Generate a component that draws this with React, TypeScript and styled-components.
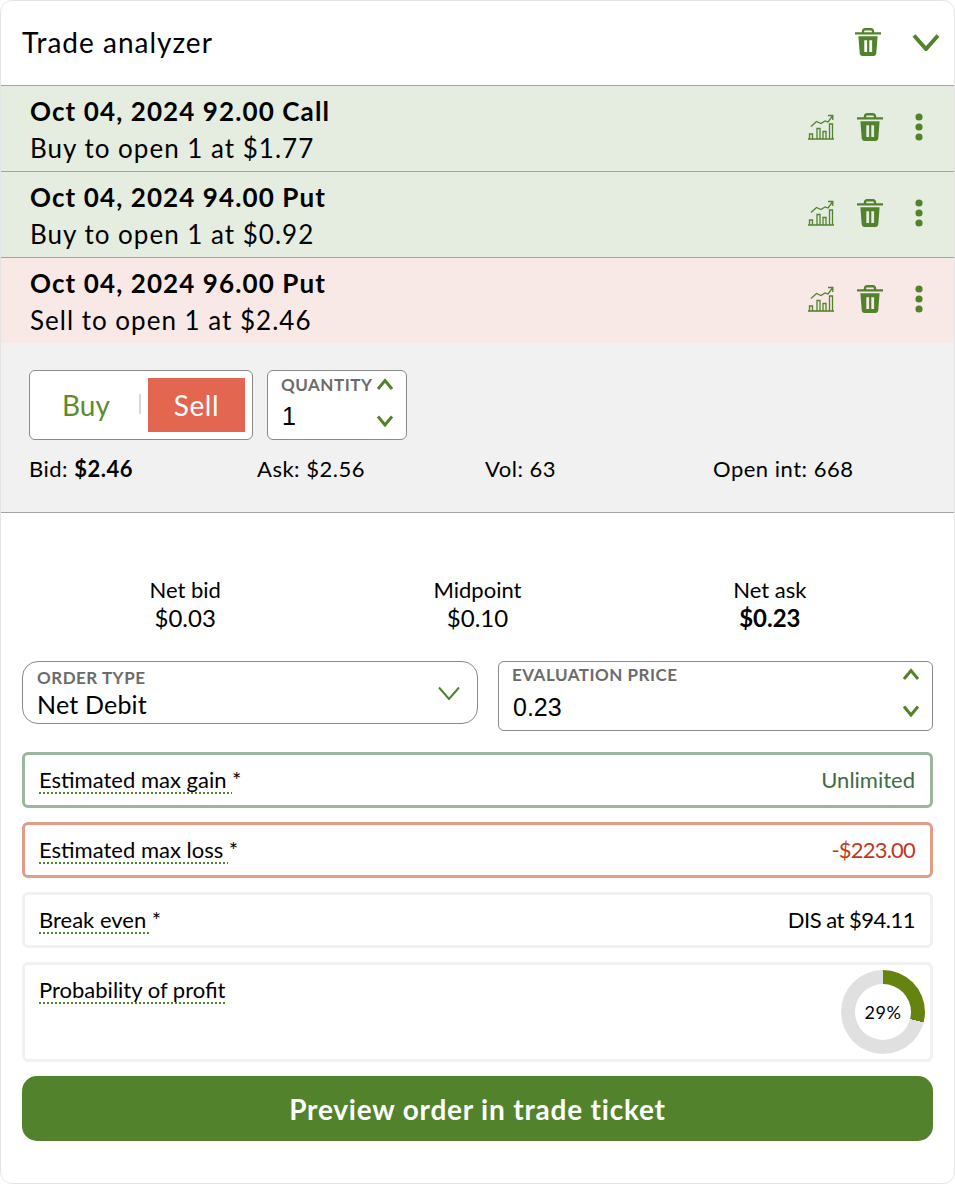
import styled, { createGlobalStyle } from "styled-components";

const Global = createGlobalStyle`
  html, body {
    margin: 0;
    padding: 0;
    background: #ffffff;
  }
  * {
    box-sizing: border-box;
  }
`;

const green = "#53822c";

const Card = styled.div`
  width: 955px;
  height: 1184px;
  background: #fff;
  border: 1px solid #e4e4e4;
  border-radius: 12px;
  overflow: hidden;
  font-family: Lato, "Liberation Sans", sans-serif;
  color: #000;
`;
const Header = styled.div`
  height: 85px;
  display: flex;
  align-items: center;
  padding: 0 14px 0 21px;
  border-bottom: 1px solid #a3a3a3;
`;
const Title = styled.div`
  flex: 1;
  font-size: 28px;
  line-height: 34px;
  letter-spacing: 1px;
  margin-top: -2px;
`;
const HeaderIcons = styled.div`
  display: flex;
  align-items: center;
  gap: 31px;
  margin-top: -3px;
`;
const LegRow = styled.div<{ $bg: string; $line: boolean }>`
  height: ${(p) => (p.$line ? 86 : 85)}px;
  display: flex;
  align-items: center;
  padding: 0 22px 0 29px;
  background: ${(p) => p.$bg};
  border-bottom: ${(p) => (p.$line ? "1px solid #a3a3a3" : "none")};
`;
const LegText = styled.div`
  flex: 1;
  margin-top: 2px;
`;
const LegName = styled.div`
  font-size: 26px;
  font-weight: 700;
  line-height: 34px;
  letter-spacing: 1.1px;
`;
const LegDetail = styled.div`
  font-size: 26px;
  line-height: 36px;
  letter-spacing: 1px;
  margin-top: 2px;
`;
const LegIcons = styled.div`
  display: flex;
  align-items: center;
  margin-top: -3px;
`;
const Panel = styled.div`
  height: 170px;
  padding: 27px 28px 0;
  background: #f1f1f1;
  border-bottom: 1px solid #a3a3a3;
`;
const Controls = styled.div`
  display: flex;
  gap: 14px;
`;
const Toggle = styled.div`
  width: 224px;
  height: 70px;
  display: flex;
  align-items: center;
  padding-right: 7px;
  background: #fff;
  border: 1px solid #8a8a8a;
  border-radius: 6px;
`;
const BuyOption = styled.div`
  position: relative;
  width: 118px;
  height: 54px;
  display: flex;
  align-items: center;
  justify-content: center;
  padding-right: 6px;
  font-size: 28px;
  color: #5f8a2e;
  &::after {
    content: "";
    position: absolute;
    right: 7px;
    top: 16px;
    width: 2px;
    height: 20px;
    background: #d8d8d8;
  }
`;
const SellOption = styled.div`
  flex: 1;
  height: 54px;
  display: flex;
  align-items: center;
  justify-content: center;
  font-size: 28px;
  letter-spacing: 0.6px;
  color: #fff;
  background: #e26650;
`;
const Stepper = styled.div<{ $w: number; $top: number }>`
  position: relative;
  width: ${(p) => p.$w}px;
  height: 70px;
  padding: ${(p) => p.$top}px 0 0 13px;
  background: #fff;
  border: 1px solid #8a8a8a;
  border-radius: 6px;
`;
const FieldLabel = styled.div`
  font-size: 17px;
  font-weight: 700;
  line-height: 22px;
  letter-spacing: 0.5px;
  color: #6b6b6b;
`;
const StepperValue = styled.div<{ $gap: number }>`
  font-size: 25px;
  line-height: 30px;
  margin: ${(p) => p.$gap}px 0 0 1px;
  font-family: "Liberation Sans", Lato, sans-serif;
`;
const StepButton = styled.div<{ $right: number; $top: number }>`
  position: absolute;
  right: ${(p) => p.$right}px;
  top: ${(p) => p.$top}px;
  display: flex;
`;
const StatRow = styled.div`
  display: grid;
  grid-template-columns: repeat(4, 228px);
  margin-top: 15px;
  font-size: 22px;
  line-height: 28px;
  letter-spacing: 0.5px;
`;
const Summary = styled.div`
  display: grid;
  grid-template-columns: repeat(3, 1fr);
  padding: 63px 38px 0;
  text-align: center;
`;
const SummaryLabel = styled.div`
  font-size: 22px;
  line-height: 28px;
`;
const SummaryValue = styled.div<{ $bold?: boolean }>`
  font-size: 24px;
  line-height: 28px;
  font-weight: ${(p) => (p.$bold ? 700 : 400)};
`;
const Inputs = styled.div`
  display: flex;
  justify-content: space-between;
  align-items: flex-start;
  padding: 29px 21px 0;
`;
const OrderType = styled.div`
  width: 456px;
  height: 63px;
  display: flex;
  align-items: center;
  padding: 0 16px 0 14px;
  border: 1px solid #8a8a8a;
  border-radius: 16px;
`;
const OrderText = styled.div`
  flex: 1;
`;
const OrderValue = styled.div`
  font-size: 25px;
  line-height: 30px;
  letter-spacing: 0.2px;
`;
const Metrics = styled.div`
  display: flex;
  flex-direction: column;
  gap: 14px;
  padding: 21px 21px 0;
`;
const Metric = styled.div<{ $border: string; $h: number }>`
  height: ${(p) => p.$h}px;
  display: flex;
  justify-content: space-between;
  padding: 11px 15px 0 14px;
  border: 3px solid ${(p) => p.$border};
  border-radius: 6px;
  font-size: 22px;
  line-height: 28px;
`;
const Dotted = styled.span`
  text-decoration: underline dotted #53822c 2px;
  text-underline-offset: 4px;
`;
const MetricValue = styled.div<{ $color: string; $spacing: number }>`
  color: ${(p) => p.$color};
  letter-spacing: ${(p) => p.$spacing}px;
`;
const Donut = styled.div`
  position: relative;
  width: 84px;
  height: 84px;
  margin: -6px -10px 0 0;
  border-radius: 50%;
  background: conic-gradient(#64830f 0 29%, #e0e0e0 29% 100%);
  display: flex;
  align-items: center;
  justify-content: center;
  &::before {
    content: "";
    position: absolute;
    inset: 14px;
    border-radius: 50%;
    background: #fff;
  }
`;
const DonutText = styled.span`
  position: relative;
  font-size: 18px;
  letter-spacing: 0.5px;
`;
const Preview = styled.button`
  display: block;
  width: 911px;
  height: 65px;
  margin: 14px 0 0 21px;
  border: none;
  border-radius: 15px;
  background: ${green};
  color: #fff;
  font-family: inherit;
  font-size: 28px;
  font-weight: 700;
  letter-spacing: 0.8px;
`;
const IconSlot = styled.div<{ $w: number }>`
  width: ${(p) => p.$w}px;
  display: flex;
  justify-content: center;
`;

function Trash() {
  return (
    <svg width="26" height="28" viewBox="0 0 26 28">
      <path
        fill={green}
        fillRule="evenodd"
        d="M0 4.2h6.8V3.2C6.8 1.4 8.2 0 10 0h6c1.8 0 3.2 1.4 3.2 3.2v1H26v2.3H0zM9.200 4.200h7.600V3.400c0-.6-.4-1-1-1H10.200c-.6 0-1 .4-1 1zM3.400 8.200h19.200l-1.300 17.100c-.1 1.500-1.300 2.700-2.800 2.700H7.500c-1.500 0-2.700-1.200-2.800-2.700zM9.300 12.300v11.700h2.800V12.300zM14.300 12.300v11.700h2.800V12.300z"
      />
    </svg>
  );
}

function Chevron({ up, w, h, sw }: { up?: boolean; w: number; h: number; sw: number }) {
  const d = up ? `M2 ${h - 2}L${w / 2} 2.5L${w - 2} ${h - 2}` : `M2 2.5L${w / 2} ${h - 2}L${w - 2} 2.5`;
  return (
    <svg width={w} height={h} viewBox={`0 0 ${w} ${h}`}>
      <path d={d} fill="none" stroke={green} strokeWidth={sw} />
    </svg>
  );
}

function ChartIcon() {
  return (
    <svg width="26" height="26" viewBox="0 0 26 26" fill="none" stroke={green} strokeWidth="1.3">
      <path d="M0 25h26" strokeWidth="1.6" />
      <path d="M1.5 25v-5h3v5M9 25V14.5h3V25M15 25v-7.500h3V25M21.500 25V10h3v15" />
      <path d="M3 12.500L8.500 7.500l4.500 2 4-2.500 3 1 4.500-6M20 1.500h4.800v4.500" />
    </svg>
  );
}

function Dots() {
  return (
    <svg width="10" height="28" viewBox="0 0 10 28">
      <circle cx="5" cy="4" r="3.6" fill={green} />
      <circle cx="5" cy="14" r="3.6" fill={green} />
      <circle cx="5" cy="24" r="3.6" fill={green} />
    </svg>
  );
}

const legs = [
  { name: "Oct 04, 2024 92.00 Call", detail: "Buy to open 1 at $1.77", bg: "#e5ece0", line: true },
  { name: "Oct 04, 2024 94.00 Put", detail: "Buy to open 1 at $0.92", bg: "#e5ece0", line: true },
  { name: "Oct 04, 2024 96.00 Put", detail: "Sell to open 1 at $2.46", bg: "#f9e9e6", line: false },
];

export default function App() {
  return (
    <Card>
      <Global />
      <Header>
        <Title>Trade analyzer</Title>
        <HeaderIcons>
          <Trash />
          <Chevron w={28} h={18} sw={4} />
        </HeaderIcons>
      </Header>
      {legs.map((leg) => (
        <LegRow key={leg.name} $bg={leg.bg} $line={leg.line}>
          <LegText>
            <LegName>{leg.name}</LegName>
            <LegDetail>{leg.detail}</LegDetail>
          </LegText>
          <LegIcons>
            <IconSlot $w={26}>
              <ChartIcon />
            </IconSlot>
            <IconSlot $w={72}>
              <Trash />
            </IconSlot>
            <IconSlot $w={26}>
              <Dots />
            </IconSlot>
          </LegIcons>
        </LegRow>
      ))}
      <Panel>
        <Controls>
          <Toggle>
            <BuyOption>Buy</BuyOption>
            <SellOption>Sell</SellOption>
          </Toggle>
          <Stepper $w={140} $top={3}>
            <FieldLabel>QUANTITY</FieldLabel>
            <StepperValue $gap={5}>1</StepperValue>
            <StepButton $right={12} $top={7}>
              <Chevron up w={18} h={13} sw={3} />
            </StepButton>
            <StepButton $right={12} $top={43}>
              <Chevron w={18} h={13} sw={3} />
            </StepButton>
          </Stepper>
        </Controls>
        <StatRow>
          <div>
            Bid: <b>$2.46</b>
          </div>
          <div>Ask: $2.56</div>
          <div>Vol: 63</div>
          <div>Open int: 668</div>
        </StatRow>
      </Panel>
      <Summary>
        <div>
          <SummaryLabel>Net bid</SummaryLabel>
          <SummaryValue>$0.03</SummaryValue>
        </div>
        <div>
          <SummaryLabel>Midpoint</SummaryLabel>
          <SummaryValue>$0.10</SummaryValue>
        </div>
        <div>
          <SummaryLabel>Net ask</SummaryLabel>
          <SummaryValue $bold>$0.23</SummaryValue>
        </div>
      </Summary>
      <Inputs>
        <OrderType>
          <OrderText>
            <FieldLabel>ORDER TYPE</FieldLabel>
            <OrderValue>Net Debit</OrderValue>
          </OrderText>
          <Chevron w={24} h={16} sw={2} />
        </OrderType>
        <Stepper $w={435} $top={2}>
          <FieldLabel>EVALUATION PRICE</FieldLabel>
          <StepperValue $gap={6}>0.23</StepperValue>
          <StepButton $right={12} $top={6}>
            <Chevron up w={18} h={13} sw={3} />
          </StepButton>
          <StepButton $right={12} $top={42}>
            <Chevron w={18} h={13} sw={3} />
          </StepButton>
        </Stepper>
      </Inputs>
      <Metrics>
        <Metric $border="#9cb59e" $h={56}>
          <div>
            <Dotted>Estimated max gain </Dotted>*
          </div>
          <MetricValue $color="#3f6b45" $spacing={0}>
            Unlimited
          </MetricValue>
        </Metric>
        <Metric $border="#e29c88" $h={56}>
          <div>
            <Dotted>Estimated max loss </Dotted>*
          </div>
          <MetricValue $color="#c0391b" $spacing={-0.8}>
            -$223.00
          </MetricValue>
        </Metric>
        <Metric $border="#f1f1f1" $h={56}>
          <div>
            <Dotted>Break even </Dotted>*
          </div>
          <MetricValue $color="#000" $spacing={-0.5}>
            DIS at $94.11
          </MetricValue>
        </Metric>
        <Metric $border="#f1f1f1" $h={100}>
          <Dotted>Probability of profit</Dotted>
          <Donut>
            <DonutText>29%</DonutText>
          </Donut>
        </Metric>
      </Metrics>
      <Preview>Preview order in trade ticket</Preview>
    </Card>
  );
}
